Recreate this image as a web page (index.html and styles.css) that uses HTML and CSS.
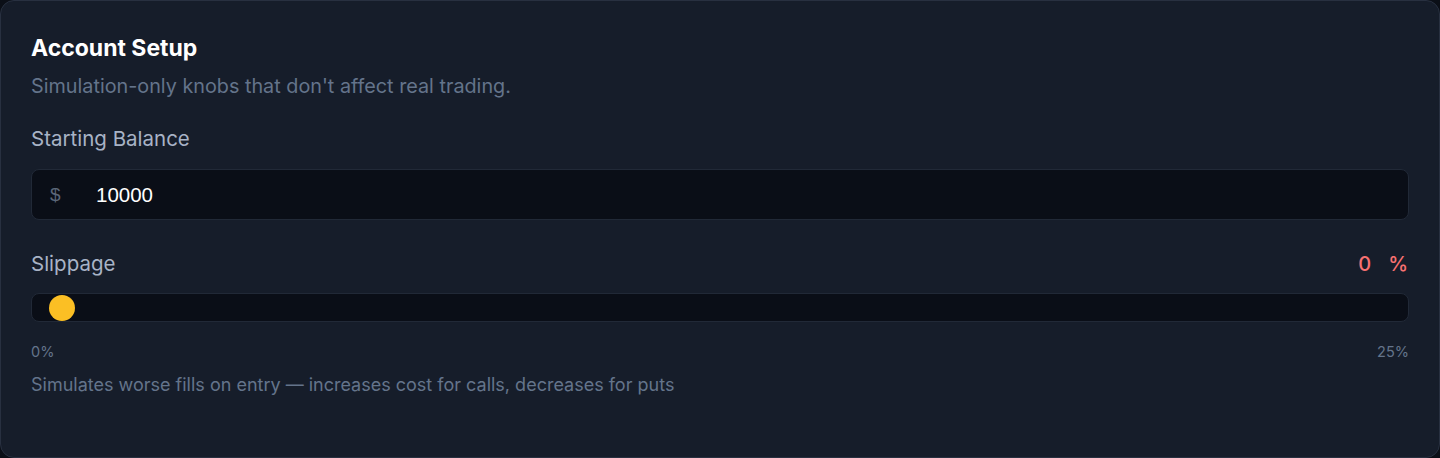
FILE: index.html
```html
<!DOCTYPE html>
<html>
<head>
  <link rel="stylesheet" href="styles.css">
</head>
<body>
  <div class="card">
    <h2 class="title">Account Setup</h2>
    <p class="subtitle">Simulation-only knobs that don't affect real trading.</p>

    <div class="field">
      <label class="label">Starting Balance</label>
      <div class="input-box">
        <span class="prefix">$</span>
        <span class="value">10000</span>
      </div>
    </div>

    <div class="field slip">
      <div class="label-row">
        <label class="label">Slippage</label>
        <div class="readout"><span>0</span><span>%</span></div>
      </div>
      <div class="track">
        <div class="thumb"></div>
      </div>
      <div class="range-labels">
        <span>0%</span>
        <span>25%</span>
      </div>
      <p class="help">Simulates worse fills on entry — increases cost for calls, decreases for puts</p>
    </div>
  </div>
</body>
</html>
```

FILE: styles.css
```css
body {
  margin: 0;
  background: #0b0f17;
  font-family: Inter, "Noto Sans", sans-serif;
}

.card {
  box-sizing: border-box;
  height: 458px;
  background: #161d2a;
  border: 1px solid #283040;
  border-radius: 14px;
  padding: 33px 30px 0 30px;
}

.title {
  margin: 0;
  color: #fff;
  font-size: 23px;
  font-weight: 700;
  line-height: 28px;
}

.subtitle {
  margin: 10px 0 0;
  color: #64748b;
  font-size: 19.8px;
  line-height: 28px;
}

.field {
  margin-top: 25px;
}

.label {
  display: block;
  color: #a8b3c6;
  font-size: 20.5px;
  line-height: 28px;
}

.input-box {
  box-sizing: border-box;
  display: flex;
  align-items: center;
  height: 51px;
  margin-top: 16px;
  background: #0a0e17;
  border: 1px solid #212937;
  border-radius: 8px;
}

.prefix {
  width: 64px;
  padding-left: 18px;
  box-sizing: border-box;
  color: #5b6678;
  font-family: "Liberation Sans", Arial, sans-serif;
  font-size: 19px;
}

.value {
  color: #fff;
  font-family: "Liberation Sans", Arial, sans-serif;
  font-size: 20.5px;
}

.slip {
  margin-top: 30px;
}

.label-row {
  display: flex;
  justify-content: space-between;
  align-items: center;
  height: 28px;
}

.readout {
  display: flex;
  gap: 17px;
  padding-right: 1px;
  color: #f87171;
  font-size: 20px;
  font-weight: 500;
  line-height: 28px;
}

.track {
  box-sizing: border-box;
  display: flex;
  align-items: center;
  height: 29px;
  margin-top: 15px;
  background: #0a0e17;
  border: 1px solid #212937;
  border-radius: 8px;
}

.thumb {
  width: 26px;
  height: 26px;
  margin-left: 17px;
  border-radius: 50%;
  background: #fbbf24;
}

.range-labels {
  display: flex;
  justify-content: space-between;
  margin-top: 20px;
  color: #64748b;
  font-size: 14.5px;
  line-height: 20px;
}

.help {
  margin: 9px 0 0;
  color: #64748b;
  font-size: 18px;
  line-height: 28px;
}
```
